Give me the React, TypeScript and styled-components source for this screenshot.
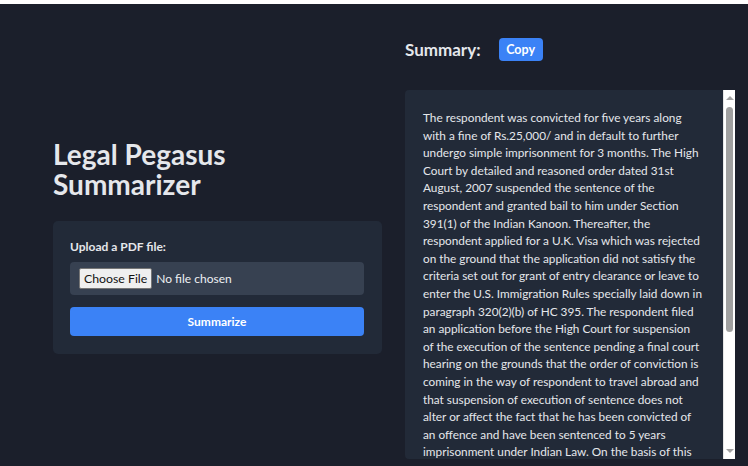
import React from "react";
import styled, { createGlobalStyle } from "styled-components";

const GlobalStyle = createGlobalStyle`
  html, body { margin: 0; padding: 0; background: #1b1f2b; }
  body { font-family: "Lato", "Noto Sans", sans-serif; overflow: hidden; }
  * { box-sizing: border-box; }
`;

const Page = styled.div`
  width: 748px;
  height: 466px;
  overflow: hidden;
  background: #1b1f2b;
  color: #e5e7eb;
`;

const TopStrip = styled.div`
  height: 4px;
  background: #ffffff;
`;

const Main = styled.main`
  display: flex;
  align-items: center;
  gap: 23px;
  padding: 34px 13px 0 53px;
`;

const LeftColumn = styled.section`
  width: 329px;
  display: flex;
  flex-direction: column;
  margin-bottom: 12px;
`;

const Title = styled.h1`
  margin: 0 0 22px;
  font-size: 28px;
  line-height: 30px;
  font-weight: 700;
  color: #e5e7eb;
`;

const Card = styled.div`
  background: #222a38;
  border-radius: 5px;
  padding: 17px 18px 18px 17px;
  display: flex;
  flex-direction: column;
`;

const Label = styled.label`
  font-size: 12px;
  line-height: 18px;
  font-weight: 700;
  color: #e5e7eb;
  margin-bottom: 6px;
`;

const FileInput = styled.input`
  height: 33px;
  width: 100%;
  padding: 6px 9px;
  background: #374151;
  color: #eef0f3;
  border: none;
  border-radius: 4px;
  font-family: "Lato", "Noto Sans", sans-serif;
  font-size: 12px;
  margin-bottom: 12px;

  &::file-selector-button {
    font-family: "Lato", "Noto Sans", sans-serif;
    font-size: 12.3px;
    height: 21px;
    padding: 0 4px;
    margin-right: 4px;
    background: #efefef;
    color: #111;
    border: 1px solid #767676;
    border-radius: 2px;
  }
`;

const PrimaryButton = styled.button<{ $compact?: boolean }>`
  background: #3b82f6;
  color: #ffffff;
  border: none;
  border-radius: 4px;
  font-family: "Lato", "Noto Sans", sans-serif;
  font-size: ${(p) => (p.$compact ? "12.5px" : "12px")};
  font-weight: 700;
  cursor: pointer;
  height: ${(p) => (p.$compact ? "23px" : "29px")};
  width: ${(p) => (p.$compact ? "44px" : "100%")};
  padding: 0;
`;

const RightColumn = styled.section`
  width: 330px;
  display: flex;
  flex-direction: column;
  padding-bottom: 7px;
`;

const SummaryHeader = styled.div`
  display: flex;
  align-items: center;
  gap: 18px;
  margin-bottom: 29px;
`;

const SummaryTitle = styled.h2`
  margin: 0;
  font-size: 17px;
  line-height: 23px;
  font-weight: 700;
  color: #e5e7eb;
`;

const SummaryBox = styled.div`
  position: relative;
  height: 369px;
  overflow: hidden;
  background: #222a38;
  border-radius: 4px 0 0 4px;
  padding: 19px 20px 17px 18px;
`;

const Line = styled.span`
  display: block;
  white-space: nowrap;
  font-size: 11.8px;
  line-height: 17.6px;
  color: #e5e7eb;
`;

const Scrollbar = styled.div`
  position: absolute;
  top: 0;
  right: 0;
  bottom: 0;
  width: 12px;
  background: #ffffff;
  border-left: 1px solid #e6e6e6;
  display: flex;
  flex-direction: column;
  align-items: center;
`;

const Arrow = styled.div<{ $down?: boolean }>`
  height: 14px;
  width: 100%;
  display: flex;
  align-items: center;
  justify-content: center;
  padding-top: ${(p) => (p.$down ? "0" : "2px")};
  padding-bottom: ${(p) => (p.$down ? "2px" : "0")};
  &::before {
    content: "";
    width: 0;
    height: 0;
    border-left: 4px solid transparent;
    border-right: 4px solid transparent;
    ${(p) =>
      p.$down
        ? "border-top: 4px solid #a3a3a3;"
        : "border-bottom: 4px solid #a3a3a3;"}
  }
`;

const Track = styled.div`
  flex: 1;
  width: 100%;
  display: flex;
  justify-content: center;
  padding-top: 3px;
`;

const Thumb = styled.div`
  width: 7px;
  height: 225px;
  border-radius: 4px;
  background: #a0a0a0;
`;

const lines = [
  "The respondent was convicted for five years along",
  "with a fine of Rs.25,000/ and in default to further",
  "undergo simple imprisonment for 3 months. The High",
  "Court by detailed and reasoned order dated 31st",
  "August, 2007 suspended the sentence of the",
  "respondent and granted bail to him under Section",
  "391(1) of the Indian Kanoon. Thereafter, the",
  "respondent applied for a U.K. Visa which was rejected",
  "on the ground that the application did not satisfy the",
  "criteria set out for grant of entry clearance or leave to",
  "enter the U.S. Immigration Rules specially laid down in",
  "paragraph 320(2)(b) of HC 395. The respondent filed",
  "an application before the High Court for suspension",
  "of the execution of the sentence pending a final court",
  "hearing on the grounds that the order of conviction is",
  "coming in the way of respondent to travel abroad and",
  "that suspension of execution of sentence does not",
  "alter or affect the fact that he has been convicted of",
  "an offence and have been sentenced to 5 years",
  "imprisonment under Indian Law. On the basis of this",
  "application, the High Court suspended the execution",
  "of the sentence pending the final hearing.",
];

export default function App() {
  return (
    <Page>
      <GlobalStyle />
      <TopStrip />
      <Main>
        <LeftColumn>
          <Title>
            Legal Pegasus
            <br />
            Summarizer
          </Title>
          <Card>
            <Label htmlFor="pdf">Upload a PDF file:</Label>
            <FileInput id="pdf" type="file" accept="application/pdf" />
            <PrimaryButton>Summarize</PrimaryButton>
          </Card>
        </LeftColumn>
        <RightColumn>
          <SummaryHeader>
            <SummaryTitle>Summary:</SummaryTitle>
            <PrimaryButton $compact>Copy</PrimaryButton>
          </SummaryHeader>
          <SummaryBox>
            {lines.map((l, i) => (
              <Line key={i}>{l}</Line>
            ))}
            <Scrollbar>
              <Arrow />
              <Track>
                <Thumb />
              </Track>
              <Arrow $down />
            </Scrollbar>
          </SummaryBox>
        </RightColumn>
      </Main>
    </Page>
  );
}
